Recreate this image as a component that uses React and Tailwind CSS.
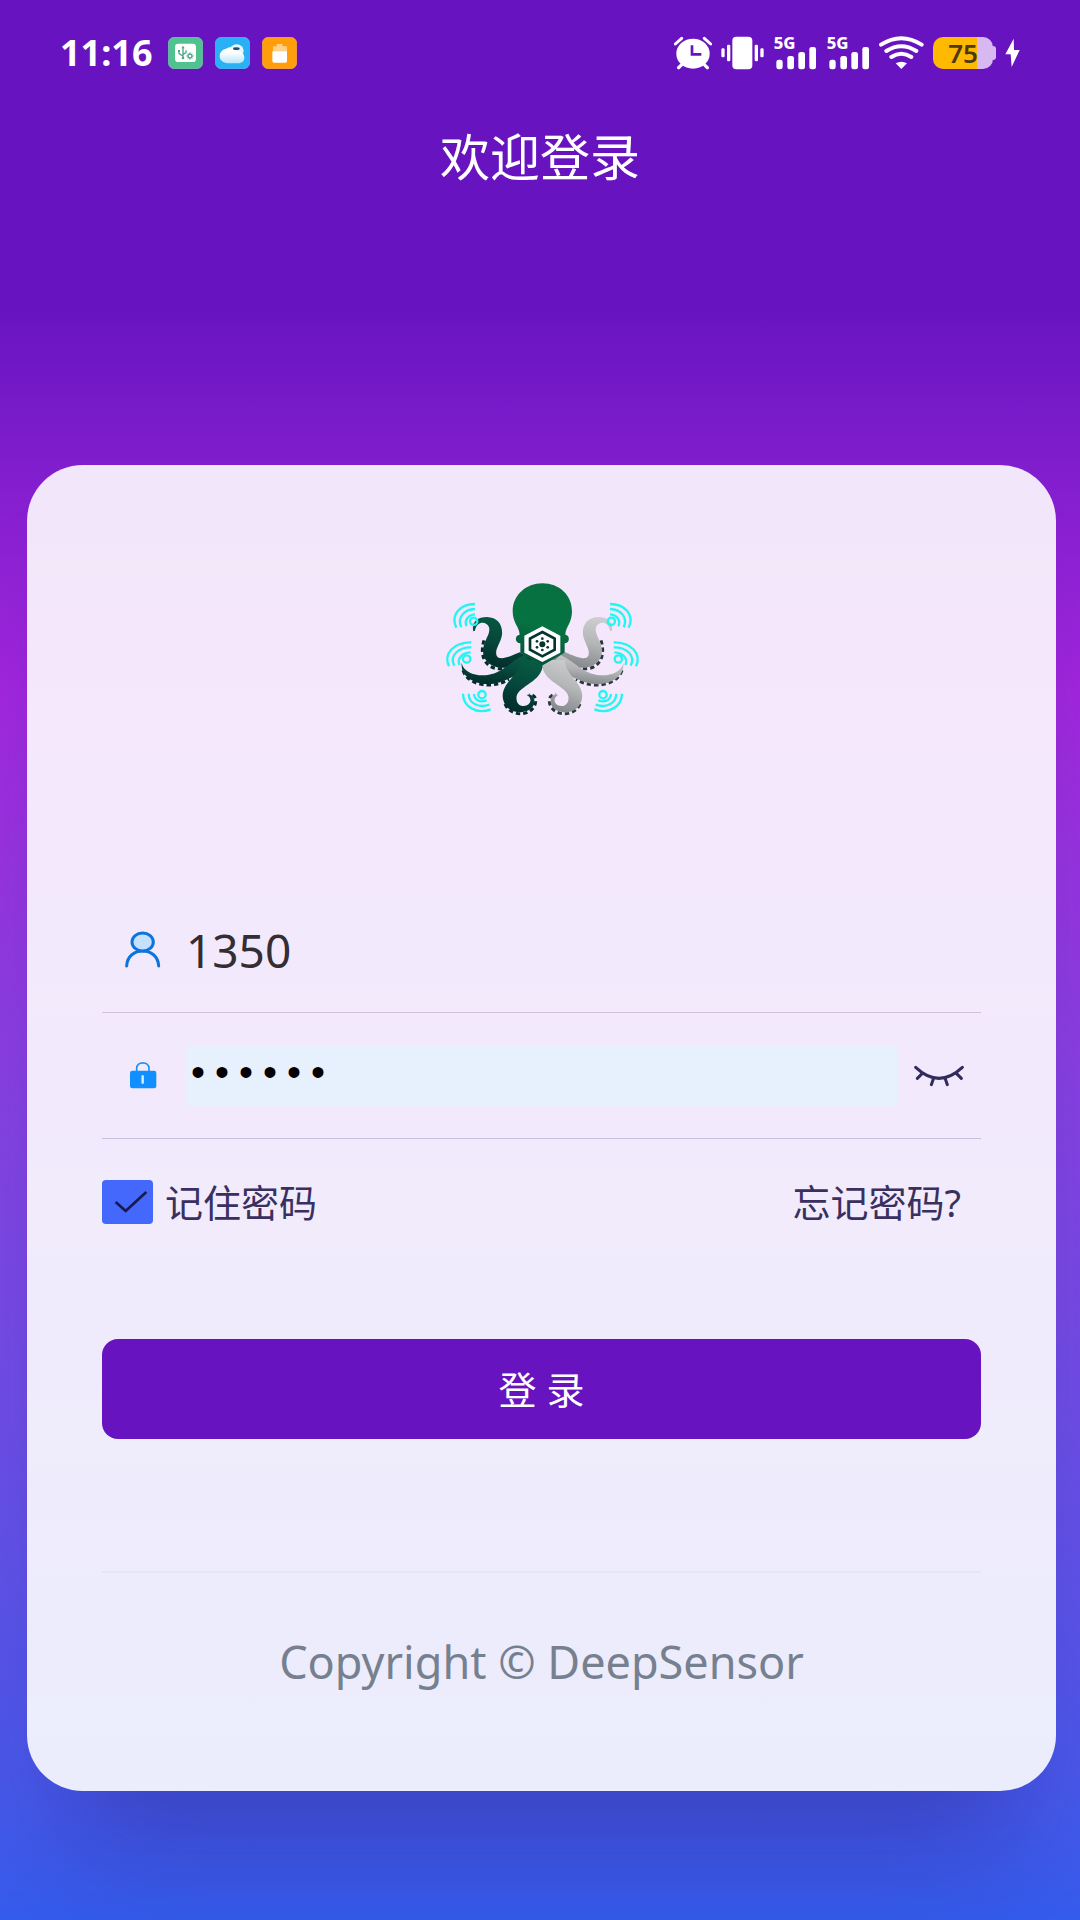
import React, { useState } from 'react';

const AlarmIcon = () => (
    <svg className="w-[38px] h-[34px]" viewBox="47 50 114 102" fill="none" aria-hidden="true">
        <ellipse cx="104" cy="103" rx="50" ry="45" fill="#fff" />
        <path d="M51 74L70 57M157 74L138 57" stroke="#fff" strokeWidth="9" strokeLinecap="round" />
        <path d="M74 132L61 145M134 132L147 145" stroke="#fff" strokeWidth="10" strokeLinecap="round" />
        <path d="M101 78V105H129" stroke="#6813c0" strokeWidth="8" />
    </svg>
);

const VibrateIcon = () => (
    <svg className="w-[43px] h-[34px]" viewBox="184 50 129 102" fill="#fff" aria-hidden="true">
        <rect x="218" y="52" width="60" height="98" rx="12" />
        <rect x="202" y="76" width="10" height="50" rx="4" />
        <rect x="285" y="76" width="10" height="50" rx="4" />
        <rect x="185" y="87" width="10" height="27" rx="4" />
        <rect x="302" y="87" width="10" height="27" rx="4" />
    </svg>
);

const SignalIcon = () => (
    <svg className="w-[44px] h-[46px]" viewBox="338 32 132 138" fill="#fff" aria-label="5G">
        <text x="340" y="90" fontFamily="Noto Sans, sans-serif" fontWeight="800" fontSize="50">5G</text>
        <rect x="348" y="121" width="19" height="29" rx="7" />
        <rect x="381" y="110" width="20" height="40" rx="7" />
        <rect x="414" y="98" width="20" height="52" rx="7" />
        <rect x="447" y="83" width="20" height="67" rx="7" />
    </svg>
);

const WifiIcon = () => (
    <svg className="w-[45px] h-[34px]" viewBox="658 50 135 102" fill="none" aria-hidden="true">
        <path d="M664 76Q725 37 786 76M680 95Q725 66 770 95M695 113Q725 93 755 113" stroke="#fff" strokeWidth="12" strokeLinecap="round" />
        <path d="M708 132Q725 122 742 132L725 149Z" fill="#fff" />
    </svg>
);

const BoltIcon = () => (
    <svg className="w-[15px] h-[30px]" viewBox="1035 62 45 88" fill="#fff" aria-hidden="true">
        <path d="M1061 63L1036 110H1052L1055 148L1079 97H1062Z" />
    </svg>
);

const UsbBadge = () => (
    <svg className="w-[35px] h-[32px]" viewBox="387 52 105 96" fill="none" aria-hidden="true">
        <rect x="388" y="53" width="103" height="94" rx="18" fill="#4fc290" stroke="#7ed3ad" strokeWidth="2" />
        <rect x="408" y="72" width="63" height="55" rx="10" fill="#fff" />
        <path d="M432 84V115M420 95V102L432 109M441 92V99L432 104" stroke="#4aa885" strokeWidth="4" />
        <path d="M432 78L437 86H427Z" fill="#4aa885" />
        <rect x="417" y="91" width="6" height="6" fill="#4aa885" />
        <circle cx="432" cy="115" r="4" fill="#4aa885" />
        <circle cx="453" cy="109" r="6" stroke="#4aa885" strokeWidth="4" />
        <path d="M453 98V101M453 117V120M442 109H445M461 109H464M446 102L448 104M458 114L460 116M460 102L458 104M446 116L448 114" stroke="#4aa885" strokeWidth="3" />
    </svg>
);

const CloudBadge = () => (
    <svg className="w-[35px] h-[32px]" viewBox="528 52 105 96" aria-hidden="true">
        <defs>
            <linearGradient id="cloud" x1="0" y1="0" x2="0" y2="1">
                <stop offset="0.3" stopColor="#fff" />
                <stop offset="1" stopColor="#b5e6fa" />
            </linearGradient>
        </defs>
        <rect x="529" y="53" width="103" height="94" rx="18" fill="#29b0f5" stroke="#55c4f8" strokeWidth="2" />
        <ellipse cx="593" cy="93" rx="21" ry="19" fill="#e6f7fe" />
        <path d="M570 131C553 131 542 123 542 110C542 98 550 90 560 88C572 79 588 83 594 94C607 95 616 103 616 114C616 125 607 131 595 131Z" fill="url(#cloud)" />
        <ellipse cx="592" cy="87" rx="10" ry="4" fill="#245068" />
    </svg>
);

const PowerBadge = () => (
    <svg className="w-[35px] h-[32px]" viewBox="666 52 105 96" aria-hidden="true">
        <rect x="667" y="53" width="103" height="94" rx="18" fill="#ff9d0a" stroke="#ffb340" strokeWidth="2" />
        <path d="M699 80H710V73H727V80H741V96H699Z" fill="#ffd08a" />
        <path d="M697 95H741V124Q741 129 736 129H702Q697 129 697 124Z" fill="#fff" />
    </svg>
);

const StatusBar = () => (
    <div className="flex h-[106px] items-center justify-between px-[60px]">
        <div className="flex items-center gap-3">
            <span className="mr-1 text-[36px] font-bold leading-none text-white">11:16</span>
            <UsbBadge />
            <CloudBadge />
            <PowerBadge />
        </div>
        <div className="flex items-center gap-[9px]">
            <AlarmIcon />
            <VibrateIcon />
            <SignalIcon />
            <SignalIcon />
            <WifiIcon />
            <div className="flex items-center">
                <div className="flex h-[32px] w-[60px] items-center justify-center rounded-[10px] bg-linear-to-r from-[#ffb900] from-74% to-[#d8b8f0] to-74% text-[26px] font-semibold leading-none text-[#4d3a10]">
                    75
                </div>
                <div className="h-[14px] w-[3px] rounded-r-sm bg-[#d8b8f0]"></div>
            </div>
            <BoltIcon />
        </div>
    </div>
);

// Left half of the arms, mirrored for the right side
const Arms = ({ fill, sucker }) => (
    <g>
        <g stroke={sucker} strokeWidth="9" strokeDasharray="13 9" fill="none">
            <path d="M193 241C184 270 186 300 210 318C225 328 245 328 264 322" />
            <path d="M130 331C140 362 175 375 205 375C230 375 250 369 268 358" />
            <path d="M256 432C266 456 290 463 310 461C335 457 350 438 348 418C346 408 338 403 328 404" />
        </g>
        <g fill={fill}>
            <path d="M161 214C155 190 169 171 202 171C234 172 250 195 247 224C243 250 224 268 231 287C240 303 270 290 300 277L345 300C310 318 270 325 240 323C210 320 191 300 190 274C190 242 214 224 208 202C200 181 170 184 166 212Z" />
            <path d="M126 309C132 338 170 350 204 345C250 338 275 302 314 285L350 318C310 330 258 371 205 373C160 372 122 348 126 309Z" />
            <path d="M302 300C298 350 250 364 249 408C251 445 280 458 304 457C332 454 347 438 344 420C342 405 330 400 321 405C336 412 336 428 322 436C304 444 287 431 291 408C298 378 368 364 369 315V300Z" />
        </g>
    </g>
);

const Waves = () => (
    <g fill="none" stroke="#22f5f3" strokeWidth="7">
        <circle cx="162" cy="184" r="11" />
        <path d="M166 132C119 133 92 166 110 203M166 147C131 149 112 174 125 202M166 163C147 164 132 181 141 199" />
        <circle cx="141" cy="297" r="11" />
        <path d="M155 247C103 246 70 281 88 319M155 262C116 261 88 288 104 317M153 277C128 278 110 296 120 315" />
        <circle cx="187" cy="404" r="11" />
        <path d="M130 401C131 440 170 464 213 448M147 401C148 431 177 445 209 434M163 402C164 420 181 429 201 421" />
    </g>
);

const OctopusLogo = () => (
    <svg className="h-[140px] w-[200px]" viewBox="67 60 600 420" role="img" aria-label="DeepSensor">
        <defs>
            <linearGradient id="green" x1="0.7" y1="0" x2="0.4" y2="1">
                <stop offset="0" stopColor="#075c42" />
                <stop offset="0.5" stopColor="#06483c" />
                <stop offset="1" stopColor="#022d2b" />
            </linearGradient>
            <linearGradient id="grey" x1="0.2" y1="0" x2="0.5" y2="1">
                <stop offset="0" stopColor="#cfcfd1" />
                <stop offset="0.5" stopColor="#b4b6b8" />
                <stop offset="1" stopColor="#85898b" />
            </linearGradient>
            <linearGradient id="head" x1="0.6" y1="0" x2="0.4" y2="1">
                <stop offset="0" stopColor="#087040" />
                <stop offset="0.5" stopColor="#067342" />
                <stop offset="1" stopColor="#06503a" />
            </linearGradient>
        </defs>
        <g transform="translate(737 0) scale(-1 1)">
            <Arms fill="url(#grey)" sucker="#26383b" />
        </g>
        <Arms fill="url(#green)" sucker="#022b2b" />
        <path d="M368 70C418 70 457 105 457 154C457 190 438 200 437 224C452 225 451 250 435 250V278L369 316L302 278V250C285 250 284 225 300 224C299 200 279 190 279 154C279 105 320 70 368 70Z" fill="url(#head)" />
        <path d="M368 199L422 227V278L368 306L314 278V227Z" fill="#fff" />
        <path d="M368 216L405 236V269L368 289L331 269V236Z" fill="#fff" stroke="#04352f" strokeWidth="8" />
        <g fill="#04352f">
            <circle cx="368" cy="253" r="9" />
            <circle cx="368" cy="236" r="4" />
            <circle cx="368" cy="270" r="4" />
            <circle cx="352" cy="244" r="4" />
            <circle cx="384" cy="244" r="4" />
            <circle cx="352" cy="262" r="4" />
            <circle cx="384" cy="262" r="4" />
        </g>
        <Waves />
        <g transform="translate(737 0) scale(-1 1)">
            <Waves />
        </g>
    </svg>
);

const UserIcon = () => (
    <svg className="h-[38px] w-[38px]" viewBox="104 93 114 114" fill="none" stroke="#0b74dd" strokeWidth="9" strokeLinecap="round" aria-hidden="true">
        <path d="M112 198C114 138 206 138 208 198" />
        <ellipse cx="160" cy="126" rx="32" ry="27" fill="#c5e1fd" />
    </svg>
);

const LockIcon = () => (
    <svg className="h-[27px] w-[38px]" viewBox="104 487 114 81" fill="none" aria-hidden="true">
        <path d="M142 516V506C142 484 179 484 179 506V516" stroke="#1690fc" strokeWidth="5" />
        <rect x="122" y="513" width="79" height="53" rx="7" fill="#128fff" />
        <path d="M160 527V552" stroke="#dff0ff" strokeWidth="7" />
    </svg>
);

const ClosedEyeIcon = () => (
    <svg className="h-[24px] w-[52px]" viewBox="460 130 156 72" fill="none" stroke="#322b5c" strokeWidth="9" strokeLinecap="round" aria-hidden="true">
        <path d="M468 140Q538 206 608 140M488 158L473 173M521 175L515 192M557 175L563 192M590 158L605 173" />
    </svg>
);

const App = () => {
    const [account, setAccount] = useState('1350');
    const [password, setPassword] = useState('123456');
    const [remember, setRemember] = useState(true);
    const [visible, setVisible] = useState(false);

    return (
        <div className="flex min-h-screen flex-col overflow-hidden bg-linear-to-b from-[#6813c0] from-16% via-[#a427e0] via-36% to-[#345ced] font-['Noto_Sans','Noto_Sans_CJK_SC',sans-serif]">
            <StatusBar />

            <h1 className="py-4 text-center text-[50px] leading-[70px] text-white">欢迎登录</h1>

            {/* Login card */}
            <main className="ml-[27px] mr-6 mt-[257px] mb-32 rounded-[56px] bg-white/89 px-[75px] pt-[115px] pb-[98px] shadow-[0_100px_120px_-40px_rgba(30,20,100,0.3)]">
                <div className="flex justify-center">
                    <OctopusLogo />
                </div>

                <form className="mt-[167px]" onSubmit={(e) => e.preventDefault()}>
                    <div className="flex h-[126px] items-center gap-6 border-b border-[#cfc1da] pl-[22px]">
                        <label htmlFor="account" aria-label="账号"><UserIcon /></label>
                        <input
                            id="account"
                            type="text"
                            value={account}
                            onChange={(e) => setAccount(e.target.value)}
                            className="min-w-0 flex-1 bg-transparent text-[46px] leading-[60px] text-[#332d35] outline-none"
                        />
                    </div>

                    <div className="flex h-[126px] items-center gap-6 border-b border-[#c9bfda] pl-[22px]">
                        <label htmlFor="password" aria-label="密码"><LockIcon /></label>
                        <input
                            id="password"
                            type={visible ? 'text' : 'password'}
                            value={password}
                            onChange={(e) => setPassword(e.target.value)}
                            className="h-[60px] min-w-0 flex-1 bg-[#e7f0fd] font-['Liberation_Mono',monospace] text-[40px] text-black outline-none"
                        />
                        <button
                            type="button"
                            aria-label="显示密码"
                            onClick={() => setVisible(!visible)}
                            className="-ml-2 pr-4"
                        >
                            <ClosedEyeIcon />
                        </button>
                    </div>

                    <div className="mt-[36px] flex items-center justify-between text-[38px] leading-[54px] text-[#3a3060]">
                        <label className="flex items-center gap-3">
                            <span className="grid">
                                <input
                                    type="checkbox"
                                    checked={remember}
                                    onChange={(e) => setRemember(e.target.checked)}
                                    className="col-start-1 row-start-1 h-[44px] w-[51px] appearance-none rounded-sm bg-white checked:bg-[#4468fb]"
                                />
                                {remember && (
                                    <svg className="pointer-events-none col-start-1 row-start-1 h-[44px] w-[51px]" viewBox="36 841 153 132" fill="none" aria-hidden="true">
                                        <path d="M77 907L107 934L169 877" stroke="#19194c" strokeWidth="8" />
                                    </svg>
                                )}
                            </span>
                            记住密码
                        </label>
                        <a href="#forgot" className="pr-5">忘记密码?</a>
                    </div>

                    <button type="submit" className="mt-[110px] h-[100px] w-full rounded-2xl bg-[#6813c0] text-[38px] text-white">
                        登 录
                    </button>
                </form>

                <footer className="mt-[132px] border-t-2 border-[#e6e4f8] pt-[58px] text-center text-[45px] leading-[62px] text-[#76808f]">
                    Copyright © DeepSensor
                </footer>
            </main>
        </div>
    );
};

export default App;
